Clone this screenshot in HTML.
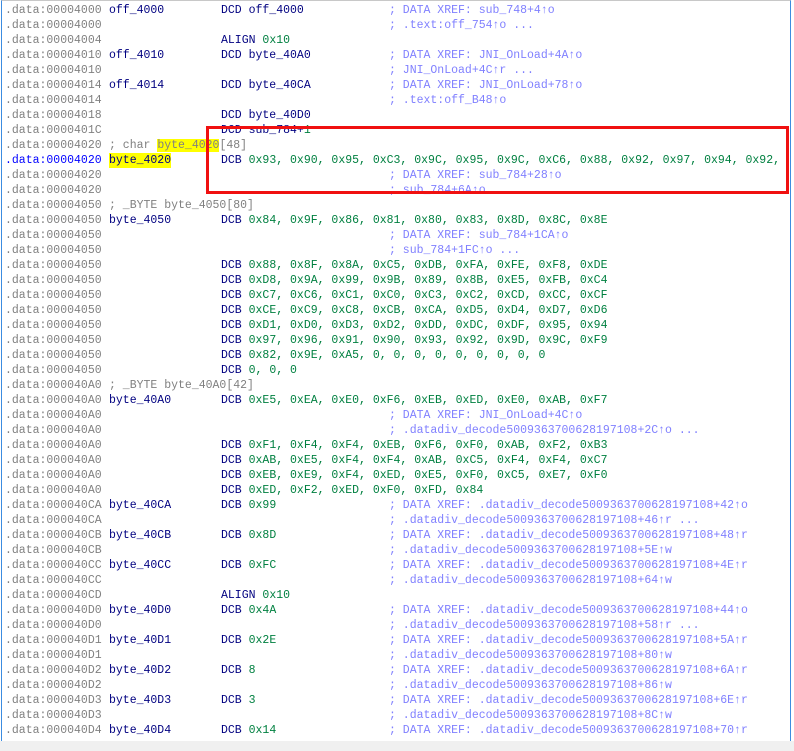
<!DOCTYPE html>
<html><head><meta charset="utf-8"><style>
html,body{margin:0;padding:0;background:#fff;}
body{width:794px;height:751px;overflow:hidden;position:relative;font-family:"Liberation Mono",monospace;font-size:11.5px;}
#v{position:absolute;left:1px;top:0;width:788px;height:741px;border-left:1px solid #3c8ce0;border-top:1px solid #c8c8c8;border-right:1px solid #3c8ce0;overflow:hidden;}
.r{position:absolute;left:0;height:15px;line-height:15px;white-space:pre;width:800px;}
.r span{position:absolute;top:0;}
.a{left:3px;color:#808080}
.ab{left:3px;color:#0000ff}
.l{left:107px;color:#000080}
.i{left:219px;color:#000080}
.c{left:387px;color:#8080ff}
.n{color:#008040}
.g{color:#808080}
.y{background:#ffff00}
#box{position:absolute;left:206px;top:126px;width:577px;height:62px;border:3px solid #f01010;}
#bot{position:absolute;left:0;top:741px;width:794px;height:10px;background:#f0f0f0;}
</style></head><body>
<div id="v">
<div class="r" style="top:2px"><span class="a">.data:00004000</span><span class="l">off_4000</span><span class="i">DCD off_4000</span><span class="c">; DATA XREF: sub_748+4↑o</span></div>
<div class="r" style="top:17px"><span class="a">.data:00004000</span><span class="c">; .text:off_754↑o ...</span></div>
<div class="r" style="top:32px"><span class="a">.data:00004004</span><span class="i">ALIGN <b class="n" style="font-weight:normal">0x10</b></span></div>
<div class="r" style="top:47px"><span class="a">.data:00004010</span><span class="l">off_4010</span><span class="i">DCD byte_40A0</span><span class="c">; DATA XREF: JNI_OnLoad+4A↑o</span></div>
<div class="r" style="top:62px"><span class="a">.data:00004010</span><span class="c">; JNI_OnLoad+4C↑r ...</span></div>
<div class="r" style="top:77px"><span class="a">.data:00004014</span><span class="l">off_4014</span><span class="i">DCD byte_40CA</span><span class="c">; DATA XREF: JNI_OnLoad+78↑o</span></div>
<div class="r" style="top:92px"><span class="a">.data:00004014</span><span class="c">; .text:off_B48↑o</span></div>
<div class="r" style="top:107px"><span class="a">.data:00004018</span><span class="i">DCD byte_40D0</span></div>
<div class="r" style="top:122px"><span class="a">.data:0000401C</span><span class="i">DCD sub_784+<b class="n" style="font-weight:normal">1</b></span></div>
<div class="r" style="top:137px"><span class="a">.data:00004020</span><span class="l g">; char <i class="y" style="font-style:normal">byte_4020</i>[48]</span></div>
<div class="r" style="top:152px"><span class="ab">.data:00004020</span><span class="l y">byte_4020</span><span class="i">DCB <b class="n" style="font-weight:normal">0x93, 0x90, 0x95, 0xC3, 0x9C, 0x95, 0x9C, 0xC6, 0x88, 0x92, 0x97, 0x94, 0x92,</b></span></div>
<div class="r" style="top:167px"><span class="a">.data:00004020</span><span class="c">; DATA XREF: sub_784+28↑o</span></div>
<div class="r" style="top:182px"><span class="a">.data:00004020</span><span class="c">; sub_784+6A↑o</span></div>
<div class="r" style="top:197px"><span class="a">.data:00004050</span><span class="l g">; _BYTE byte_4050[80]</span></div>
<div class="r" style="top:212px"><span class="a">.data:00004050</span><span class="l">byte_4050</span><span class="i">DCB <b class="n" style="font-weight:normal">0x84, 0x9F, 0x86, 0x81, 0x80, 0x83, 0x8D, 0x8C, 0x8E</b></span></div>
<div class="r" style="top:227px"><span class="a">.data:00004050</span><span class="c">; DATA XREF: sub_784+1CA↑o</span></div>
<div class="r" style="top:242px"><span class="a">.data:00004050</span><span class="c">; sub_784+1FC↑o ...</span></div>
<div class="r" style="top:257px"><span class="a">.data:00004050</span><span class="i">DCB <b class="n" style="font-weight:normal">0x88, 0x8F, 0x8A, 0xC5, 0xDB, 0xFA, 0xFE, 0xF8, 0xDE</b></span></div>
<div class="r" style="top:272px"><span class="a">.data:00004050</span><span class="i">DCB <b class="n" style="font-weight:normal">0xD8, 0x9A, 0x99, 0x9B, 0x89, 0x8B, 0xE5, 0xFB, 0xC4</b></span></div>
<div class="r" style="top:287px"><span class="a">.data:00004050</span><span class="i">DCB <b class="n" style="font-weight:normal">0xC7, 0xC6, 0xC1, 0xC0, 0xC3, 0xC2, 0xCD, 0xCC, 0xCF</b></span></div>
<div class="r" style="top:302px"><span class="a">.data:00004050</span><span class="i">DCB <b class="n" style="font-weight:normal">0xCE, 0xC9, 0xC8, 0xCB, 0xCA, 0xD5, 0xD4, 0xD7, 0xD6</b></span></div>
<div class="r" style="top:317px"><span class="a">.data:00004050</span><span class="i">DCB <b class="n" style="font-weight:normal">0xD1, 0xD0, 0xD3, 0xD2, 0xDD, 0xDC, 0xDF, 0x95, 0x94</b></span></div>
<div class="r" style="top:332px"><span class="a">.data:00004050</span><span class="i">DCB <b class="n" style="font-weight:normal">0x97, 0x96, 0x91, 0x90, 0x93, 0x92, 0x9D, 0x9C, 0xF9</b></span></div>
<div class="r" style="top:347px"><span class="a">.data:00004050</span><span class="i">DCB <b class="n" style="font-weight:normal">0x82, 0x9E, 0xA5, 0, 0, 0, 0, 0, 0, 0, 0, 0</b></span></div>
<div class="r" style="top:362px"><span class="a">.data:00004050</span><span class="i">DCB <b class="n" style="font-weight:normal">0, 0, 0</b></span></div>
<div class="r" style="top:377px"><span class="a">.data:000040A0</span><span class="l g">; _BYTE byte_40A0[42]</span></div>
<div class="r" style="top:392px"><span class="a">.data:000040A0</span><span class="l">byte_40A0</span><span class="i">DCB <b class="n" style="font-weight:normal">0xE5, 0xEA, 0xE0, 0xF6, 0xEB, 0xED, 0xE0, 0xAB, 0xF7</b></span></div>
<div class="r" style="top:407px"><span class="a">.data:000040A0</span><span class="c">; DATA XREF: JNI_OnLoad+4C↑o</span></div>
<div class="r" style="top:422px"><span class="a">.data:000040A0</span><span class="c">; .datadiv_decode5009363700628197108+2C↑o ...</span></div>
<div class="r" style="top:437px"><span class="a">.data:000040A0</span><span class="i">DCB <b class="n" style="font-weight:normal">0xF1, 0xF4, 0xF4, 0xEB, 0xF6, 0xF0, 0xAB, 0xF2, 0xB3</b></span></div>
<div class="r" style="top:452px"><span class="a">.data:000040A0</span><span class="i">DCB <b class="n" style="font-weight:normal">0xAB, 0xE5, 0xF4, 0xF4, 0xAB, 0xC5, 0xF4, 0xF4, 0xC7</b></span></div>
<div class="r" style="top:467px"><span class="a">.data:000040A0</span><span class="i">DCB <b class="n" style="font-weight:normal">0xEB, 0xE9, 0xF4, 0xED, 0xE5, 0xF0, 0xC5, 0xE7, 0xF0</b></span></div>
<div class="r" style="top:482px"><span class="a">.data:000040A0</span><span class="i">DCB <b class="n" style="font-weight:normal">0xED, 0xF2, 0xED, 0xF0, 0xFD, 0x84</b></span></div>
<div class="r" style="top:497px"><span class="a">.data:000040CA</span><span class="l">byte_40CA</span><span class="i">DCB <b class="n" style="font-weight:normal">0x99</b></span><span class="c">; DATA XREF: .datadiv_decode5009363700628197108+42↑o</span></div>
<div class="r" style="top:512px"><span class="a">.data:000040CA</span><span class="c">; .datadiv_decode5009363700628197108+46↑r ...</span></div>
<div class="r" style="top:527px"><span class="a">.data:000040CB</span><span class="l">byte_40CB</span><span class="i">DCB <b class="n" style="font-weight:normal">0x8D</b></span><span class="c">; DATA XREF: .datadiv_decode5009363700628197108+48↑r</span></div>
<div class="r" style="top:542px"><span class="a">.data:000040CB</span><span class="c">; .datadiv_decode5009363700628197108+5E↑w</span></div>
<div class="r" style="top:557px"><span class="a">.data:000040CC</span><span class="l">byte_40CC</span><span class="i">DCB <b class="n" style="font-weight:normal">0xFC</b></span><span class="c">; DATA XREF: .datadiv_decode5009363700628197108+4E↑r</span></div>
<div class="r" style="top:572px"><span class="a">.data:000040CC</span><span class="c">; .datadiv_decode5009363700628197108+64↑w</span></div>
<div class="r" style="top:587px"><span class="a">.data:000040CD</span><span class="i">ALIGN <b class="n" style="font-weight:normal">0x10</b></span></div>
<div class="r" style="top:602px"><span class="a">.data:000040D0</span><span class="l">byte_40D0</span><span class="i">DCB <b class="n" style="font-weight:normal">0x4A</b></span><span class="c">; DATA XREF: .datadiv_decode5009363700628197108+44↑o</span></div>
<div class="r" style="top:617px"><span class="a">.data:000040D0</span><span class="c">; .datadiv_decode5009363700628197108+58↑r ...</span></div>
<div class="r" style="top:632px"><span class="a">.data:000040D1</span><span class="l">byte_40D1</span><span class="i">DCB <b class="n" style="font-weight:normal">0x2E</b></span><span class="c">; DATA XREF: .datadiv_decode5009363700628197108+5A↑r</span></div>
<div class="r" style="top:647px"><span class="a">.data:000040D1</span><span class="c">; .datadiv_decode5009363700628197108+80↑w</span></div>
<div class="r" style="top:662px"><span class="a">.data:000040D2</span><span class="l">byte_40D2</span><span class="i">DCB <b class="n" style="font-weight:normal">8</b></span><span class="c">; DATA XREF: .datadiv_decode5009363700628197108+6A↑r</span></div>
<div class="r" style="top:677px"><span class="a">.data:000040D2</span><span class="c">; .datadiv_decode5009363700628197108+86↑w</span></div>
<div class="r" style="top:692px"><span class="a">.data:000040D3</span><span class="l">byte_40D3</span><span class="i">DCB <b class="n" style="font-weight:normal">3</b></span><span class="c">; DATA XREF: .datadiv_decode5009363700628197108+6E↑r</span></div>
<div class="r" style="top:707px"><span class="a">.data:000040D3</span><span class="c">; .datadiv_decode5009363700628197108+8C↑w</span></div>
<div class="r" style="top:722px"><span class="a">.data:000040D4</span><span class="l">byte_40D4</span><span class="i">DCB <b class="n" style="font-weight:normal">0x14</b></span><span class="c">; DATA XREF: .datadiv_decode5009363700628197108+70↑r</span></div>
</div>
<div id="box"></div>
<div id="bot"></div>
</body></html>
